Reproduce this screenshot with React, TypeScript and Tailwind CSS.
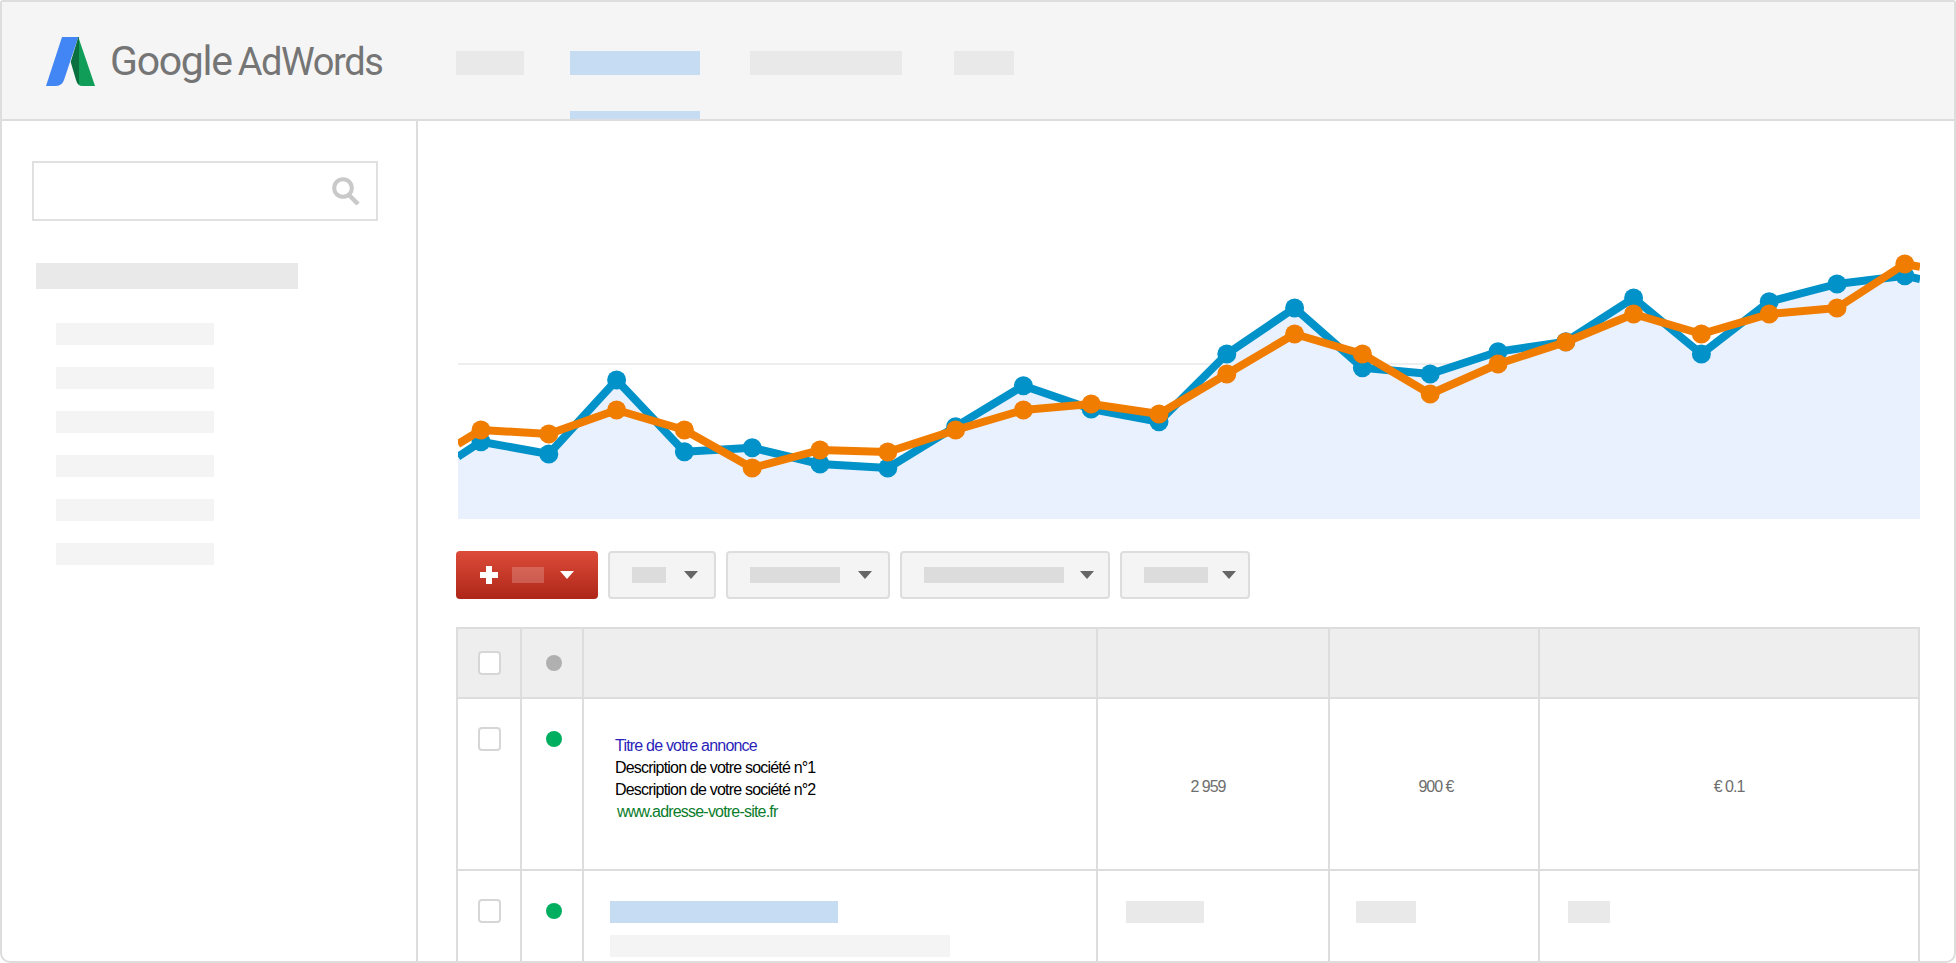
const BLUE_PTS = [441.7, 454, 380, 451.7, 447.7, 464, 468, 426.7, 385.7, 409, 421.7, 354, 308, 367.7, 374, 351.7, 341.7, 298, 354, 301.7, 284, 275.7]
const ORANGE_PTS = [430, 434, 410, 430, 468, 450, 452, 430, 410, 404, 414, 374, 334, 354, 394, 364, 342, 314, 334, 314, 308, 264]

const xAt = (i: number) => 481 + 67.8 * i

function toLine(ys: number[], startY: number, endY: number) {
  const mid = ys.map((y, i) => `${xAt(i)},${y}`).join(' ')
  return `458,${startY} ${mid} 1920,${endY}`
}

function Chart() {
  const blue = toLine(BLUE_PTS, 456.7, 279)
  const orange = toLine(ORANGE_PTS, 444, 266.7)
  return (
    <svg className="block ml-[2px] mt-[129px] shrink-0" width="1462" height="269" viewBox="458 250 1462 269">
      <rect x="458" y="363" width="1462" height="2" fill="#eeeeee" />
      <polygon points={`${blue} 1920,519 458,519`} fill="#eaf1fe" />
      <polyline points={blue} fill="none" stroke="#0092c8" strokeWidth="8" strokeLinejoin="round" />
      {BLUE_PTS.map((y, i) => <circle key={i} cx={xAt(i)} cy={y} r="9.5" fill="#0092c8" />)}
      <polyline points={orange} fill="none" stroke="#f07c00" strokeWidth="8" strokeLinejoin="round" />
      {ORANGE_PTS.map((y, i) => <circle key={i} cx={xAt(i)} cy={y} r="9.5" fill="#f07c00" />)}
    </svg>
  )
}

function Logo() {
  return (
    <svg width="49" height="49" viewBox="0 0 49 49" className="shrink-0">
      <path d="M16 0H32.3L18 43Q16 49 9 49H0Z" fill="#4285f4" />
      <path d="M32.3 0L49 49H37Q33.5 49 32.5 47.5Z" fill="#0f9d58" />
      <path d="M32.3 0L24.7 25L30 43Q31 47 33 48V0Z" fill="#0b7040" />
    </svg>
  )
}

function Caret({ color }: { color: string }) {
  return (
    <svg width="14" height="8" viewBox="0 0 14 8" className="shrink-0">
      <polygon points="0,0 14,0 7,8" fill={color} />
    </svg>
  )
}

function Dropdown({ width, barWidth, pad }: { width: string; barWidth: string; pad: string }) {
  return (
    <div className={`${width} ${pad} h-full flex items-center justify-between pl-[22px] bg-[#f4f4f4] border-2 border-[#dddddd] rounded-[4px]`}>
      <div className={`${barWidth} h-4 bg-[#dcdcdc]`} />
      <Caret color="#666666" />
    </div>
  )
}

function Checkbox({ top }: { top: string }) {
  return <div className={`${top} ml-5 w-[23px] h-6 bg-white border-2 border-[#d6d6d6] rounded-[4px]`} />
}

function Dot({ top, color }: { top: string; color: string }) {
  return <div className={`${top} ml-6 w-4 h-4 rounded-full ${color}`} />
}

const cell = 'border-r-2 border-[#dddddd]'
const columns = 'grid grid-cols-[64px_62px_514px_232px_210px_380px]'
const adText = 'leading-[22px] text-[16px] tracking-[-0.8px] font-["Liberation_Sans",Arial,sans-serif]'
const numText = 'pt-[5px] flex items-center justify-center text-[16px] tracking-[-1px] text-[#6e6e6e] font-["Liberation_Sans",Arial,sans-serif]'

function Table() {
  return (
    <div className="mt-7 flex-1 flex flex-col border-l-2 border-t-2 border-[#dddddd] bg-white">
      <div className={`${columns} h-[70px] bg-[#eeeeee] border-b-2 border-[#dddddd]`}>
        <div className={cell}><Checkbox top="mt-[22px]" /></div>
        <div className={cell}><Dot top="mt-[26px]" color="bg-[#b0b0b0]" /></div>
        <div className={cell} />
        <div className={cell} />
        <div className={cell} />
        <div className={cell} />
      </div>
      <div className={`${columns} h-[172px] border-b-2 border-[#dddddd]`}>
        <div className={cell}><Checkbox top="mt-7" /></div>
        <div className={cell}><Dot top="mt-8" color="bg-[#00ae60]" /></div>
        <div className={`${cell} pl-[31px] pt-9 ${adText}`}>
          <p className="text-[#2a1fb8]">Titre de votre annonce</p>
          <p className="text-black">Description de votre société n°1</p>
          <p className="text-black">Description de votre société n°2</p>
          <p className="ml-[2px] text-[#0a7d2c]">www.adresse-votre-site.fr</p>
        </div>
        <div className={`${cell} ${numText} pr-[10px]`}>2 959</div>
        <div className={`${cell} ${numText} pl-1`}>900 €</div>
        <div className={`${cell} ${numText}`}>€ 0.1</div>
      </div>
      <div className={`${columns} flex-1`}>
        <div className={cell}><Checkbox top="mt-7" /></div>
        <div className={cell}><Dot top="mt-8" color="bg-[#00ae60]" /></div>
        <div className={`${cell} pl-[26px] pt-[30px]`}>
          <div className="w-[228px] h-[22px] bg-[#c5dcf3]" />
          <div className="mt-3 w-[340px] h-[22px] bg-[#f4f4f4]" />
        </div>
        <div className={`${cell} pl-7 pt-[30px]`}><div className="w-[78px] h-[22px] bg-[#e9e9e9]" /></div>
        <div className={`${cell} pl-[26px] pt-[30px]`}><div className="w-[60px] h-[22px] bg-[#e9e9e9]" /></div>
        <div className={`${cell} pl-7 pt-[30px]`}><div className="w-[42px] h-[22px] bg-[#e9e9e9]" /></div>
      </div>
    </div>
  )
}

function Sidebar() {
  return (
    <aside className="w-[416px] shrink-0 border-r-2 border-[#dddddd] pl-[30px] pt-10">
      <div className="w-[346px] h-[60px] border-2 border-[#e0e0e0] flex items-center justify-end pr-4">
        <svg width="28" height="28" viewBox="0 0 28 28">
          <circle cx="11" cy="11" r="8.8" fill="none" stroke="#c9c9c9" strokeWidth="4" />
          <line x1="17" y1="18" x2="26" y2="27" stroke="#c9c9c9" strokeWidth="4.5" />
        </svg>
      </div>
      <div className="mt-[42px] ml-1 w-[262px] h-[26px] bg-[#e9e9e9]" />
      <div className="mt-[34px] ml-6 flex flex-col gap-[22px]">
        {[0, 1, 2, 3, 4, 5].map((i) => <div key={i} className="w-[158px] h-[22px] bg-[#f4f4f4]" />)}
      </div>
    </aside>
  )
}

function Header() {
  return (
    <header className="h-[119px] shrink-0 flex bg-[#f5f5f5] border-b-2 border-[#dddddd]">
      <div className="w-[454px] shrink-0 flex items-center pl-11 pt-[2px]">
        <Logo />
        <span className='ml-[15px] text-[#757575] whitespace-nowrap font-["Roboto",sans-serif]'>
          <span className="text-[41px] tracking-[-1.3px]">Google</span>
          <span className="ml-1.5 text-[38px] tracking-[-1.4px]">AdWords</span>
        </span>
      </div>
      <nav className="flex">
        <div className="w-[68px] pt-[49px]"><div className="h-6 bg-[#e9e9e9]" /></div>
        <div className="ml-[46px] w-[130px] pt-[49px] flex flex-col">
          <div className="h-6 bg-[#c5dcf3]" />
          <div className="mt-auto h-2 bg-[#c5dcf3]" />
        </div>
        <div className="ml-[50px] w-[152px] pt-[49px]"><div className="h-6 bg-[#e9e9e9]" /></div>
        <div className="ml-[52px] w-[60px] pt-[49px]"><div className="h-6 bg-[#e9e9e9]" /></div>
      </nav>
    </header>
  )
}

export default function App() {
  return (
    <div className="w-[1956px] h-[963px] flex flex-col overflow-hidden bg-white border-2 border-[#dddddd] rounded-t-[3px] rounded-b-[10px]">
      <Header />
      <div className="flex-1 min-h-0 flex">
        <Sidebar />
        <main className="flex-1 flex flex-col pl-[38px] pr-[34px]">
          <Chart />
          <div className="mt-8 h-12 flex gap-2.5 shrink-0">
            <div className="w-[142px] h-full flex items-center pl-6 rounded-[4px] bg-gradient-to-b from-[#dd4b39] to-[#ae2618]">
              <svg width="18" height="18" viewBox="0 0 18 18" className="shrink-0">
                <path d="M6 0H12V6H18V12H12V18H6V12H0V6H6Z" fill="#ffffff" />
              </svg>
              <div className="ml-3.5 w-8 h-4 bg-white/20" />
              <div className="ml-4"><Caret color="#ffffff" /></div>
            </div>
            <Dropdown width="w-[108px]" barWidth="w-[34px]" pad="pr-4" />
            <Dropdown width="w-[164px]" barWidth="w-[90px]" pad="pr-4" />
            <Dropdown width="w-[210px]" barWidth="w-[140px]" pad="pr-3.5" />
            <Dropdown width="w-[130px]" barWidth="w-16" pad="pr-3" />
          </div>
          <Table />
        </main>
      </div>
    </div>
  )
}
